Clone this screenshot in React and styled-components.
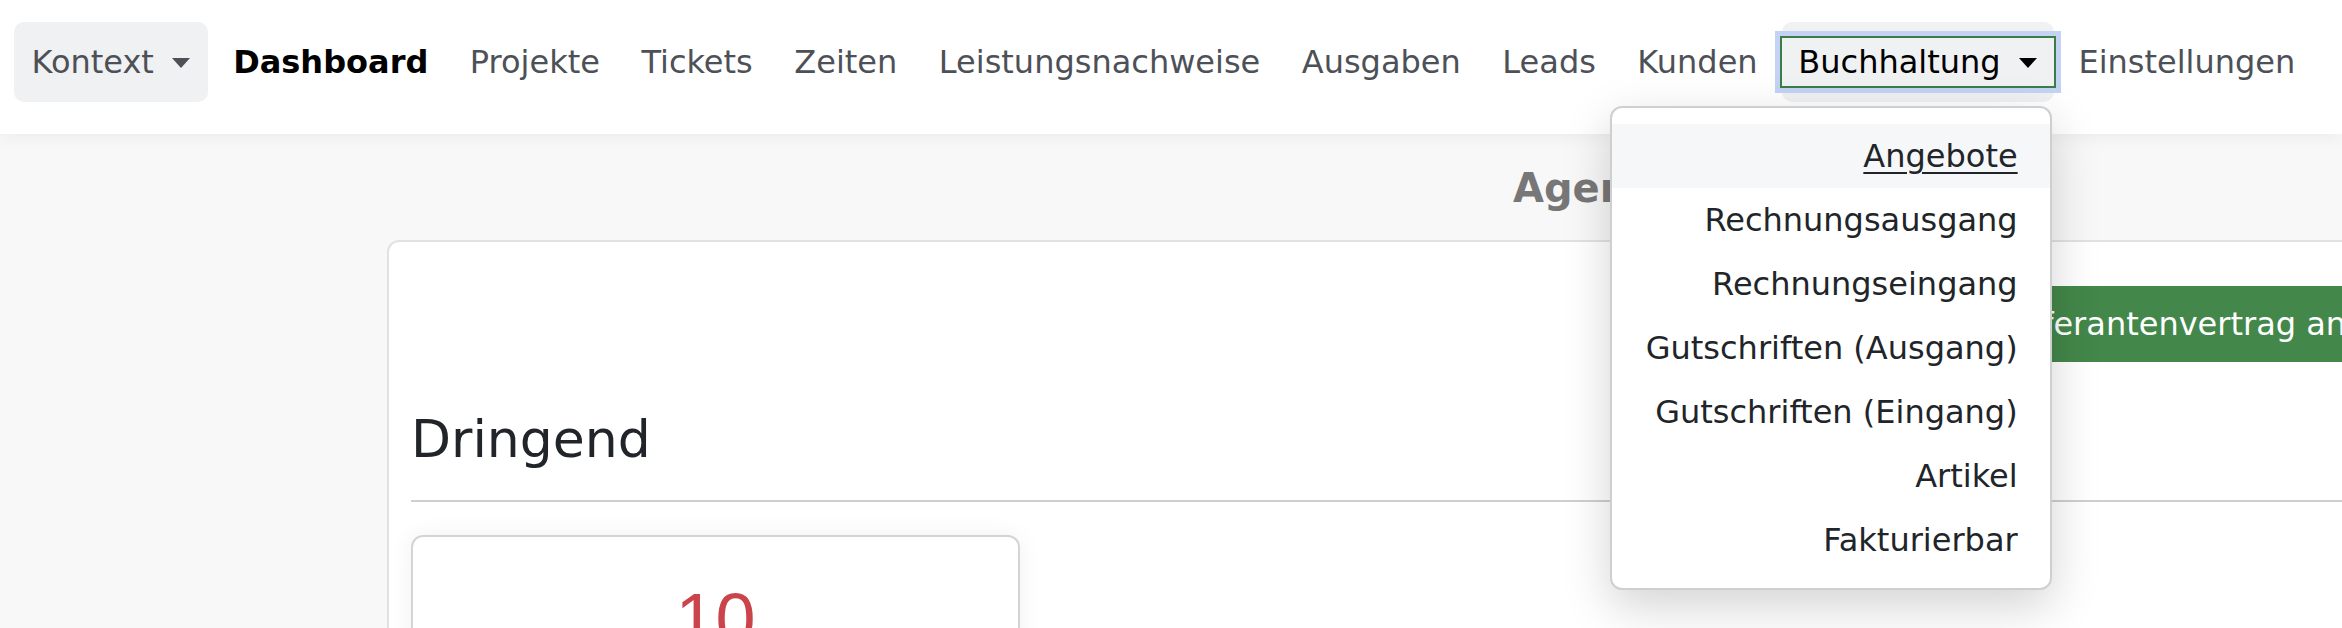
import React from 'react';
import styled, { createGlobalStyle } from 'styled-components';

const GlobalStyle = createGlobalStyle`
  html, body {
    margin: 0;
    padding: 0;
  }
  body {
    width: 2342px;
    height: 628px;
    overflow: hidden;
    background: #f8f8f8;
    font-family: "DejaVu Sans", sans-serif;
  }
`;

const NavBar = styled.nav`
  position: relative;
  z-index: 10;
  display: flex;
  align-items: center;
  padding: 22px 10px 32px;
  background: #fff;
  box-shadow: 0 4px 16px rgba(0, 0, 0, 0.05);
`;

const NavLink = styled.a`
  padding: 16px 20.75px;
  font-size: 32px;
  line-height: 48px;
  white-space: nowrap;
  text-decoration: none;
  color: ${(p) => (p.$active ? '#000' : '#4d5157')};
  font-weight: ${(p) => (p.$active ? 700 : 400)};
`;

const Dropdown = styled.div`
  position: relative;
  margin: 0 4px;
`;

const Toggle = styled.div`
  display: flex;
  padding: 16px 0;
  background: #f0f1f3;
  border-radius: 10px;
`;

const ToggleLabel = styled.span`
  display: flex;
  align-items: center;
  height: 48px;
  padding: ${(p) => (p.$open ? '0 17px 0 16px' : '0 18.5px 0 17.5px')};
  font-size: 32px;
  white-space: nowrap;
  color: ${(p) => (p.$open ? '#000' : '#4d5157')};
  outline: ${(p) => (p.$open ? '2px solid #3b7d46' : 'none')};
  box-shadow: ${(p) => (p.$open ? '0 0 0 7px #c4d3f4' : 'none')};
`;

const Caret = styled.span`
  width: 0;
  height: 0;
  margin: 2px 0 0 18px;
  border-top: 10px solid currentColor;
  border-left: 9.5px solid transparent;
  border-right: 9.5px solid transparent;
`;

const Menu = styled.div`
  position: absolute;
  top: calc(100% + 4px);
  right: 2px;
  width: 442px;
  box-sizing: border-box;
  padding: 16px 0;
  background: #fff;
  border: 2px solid #cfcfcf;
  border-radius: 12px;
  box-shadow: 0 16px 48px rgba(0, 0, 0, 0.175);
`;

const MenuItem = styled.a`
  display: block;
  padding: 8px 32px;
  font-size: 32px;
  line-height: 48px;
  text-align: right;
  white-space: nowrap;
  color: #212529;
  background: ${(p) => (p.$hover ? '#f6f7f9' : 'transparent')};
  text-decoration: ${(p) => (p.$hover ? 'underline' : 'none')};
  text-underline-offset: 5px;
  text-decoration-thickness: 2px;
`;

const Main = styled.main`
  padding-left: 387px;
`;

const PageTitle = styled.h1`
  margin: 30px 0 28px 1126px;
  font-size: 40px;
  line-height: 48px;
  font-weight: 700;
  color: #777;
  white-space: nowrap;
`;

const Card = styled.section`
  width: 2096px;
  box-sizing: border-box;
  padding: 44px 22px 0;
  background: #fff;
  border: 2px solid #e2e2e2;
  border-radius: 12px;
`;

const Actions = styled.div`
  display: flex;
  justify-content: flex-end;
`;

const Button = styled.button`
  padding: 14px 24px;
  border: none;
  border-radius: 12px;
  background: #43874a;
  color: #fff;
  font-family: "DejaVu Sans", sans-serif;
  font-size: 32px;
  line-height: 48px;
  white-space: nowrap;
`;

const SectionTitle = styled.h2`
  margin: 46px 0 0;
  font-size: 52px;
  line-height: 1.2;
  font-weight: 400;
  color: #212529;
`;

const Divider = styled.hr`
  margin: 30px 0 33px;
  border: 0;
  border-top: 2px solid #cfcfcf;
`;

const StatCard = styled.div`
  width: 609px;
  box-sizing: border-box;
  padding: 39px 0 40px;
  text-align: center;
  background: #fff;
  border: 2px solid #d4d4d4;
  border-radius: 12px;
  box-shadow: 0 0 24px rgba(0, 0, 0, 0.06);
`;

const StatValue = styled.div`
  font-family: "Liberation Sans", Arial, sans-serif;
  font-size: 72px;
  line-height: 1.2;
  color: #cc444b;
`;

const links = ['Projekte', 'Tickets', 'Zeiten', 'Leistungsnachweise', 'Ausgaben', 'Leads', 'Kunden'];
const accounting = [
  'Angebote',
  'Rechnungsausgang',
  'Rechnungseingang',
  'Gutschriften (Ausgang)',
  'Gutschriften (Eingang)',
  'Artikel',
  'Fakturierbar',
];

const App = () => {
  return (
    <>
      <GlobalStyle />
      <NavBar>
        <Dropdown>
          <Toggle>
            <ToggleLabel>
              Kontext
              <Caret />
            </ToggleLabel>
          </Toggle>
        </Dropdown>
        <NavLink $active>Dashboard</NavLink>
        {links.map((l) => (
          <NavLink key={l}>{l}</NavLink>
        ))}
        <Dropdown>
          <Toggle>
            <ToggleLabel $open>
              Buchhaltung
              <Caret />
            </ToggleLabel>
          </Toggle>
          <Menu>
            {accounting.map((item, i) => (
              <MenuItem key={item} $hover={i === 0}>
                {item}
              </MenuItem>
            ))}
          </Menu>
        </Dropdown>
        <NavLink>Einstellungen</NavLink>
      </NavBar>
      <Main>
        <PageTitle>Agenturübersicht</PageTitle>
        <Card>
          <Actions>
            <Button>Lieferantenvertrag anlegen</Button>
          </Actions>
          <SectionTitle>Dringend</SectionTitle>
          <Divider />
          <StatCard>
            <StatValue>10</StatValue>
          </StatCard>
        </Card>
      </Main>
    </>
  );
};

export default App;
